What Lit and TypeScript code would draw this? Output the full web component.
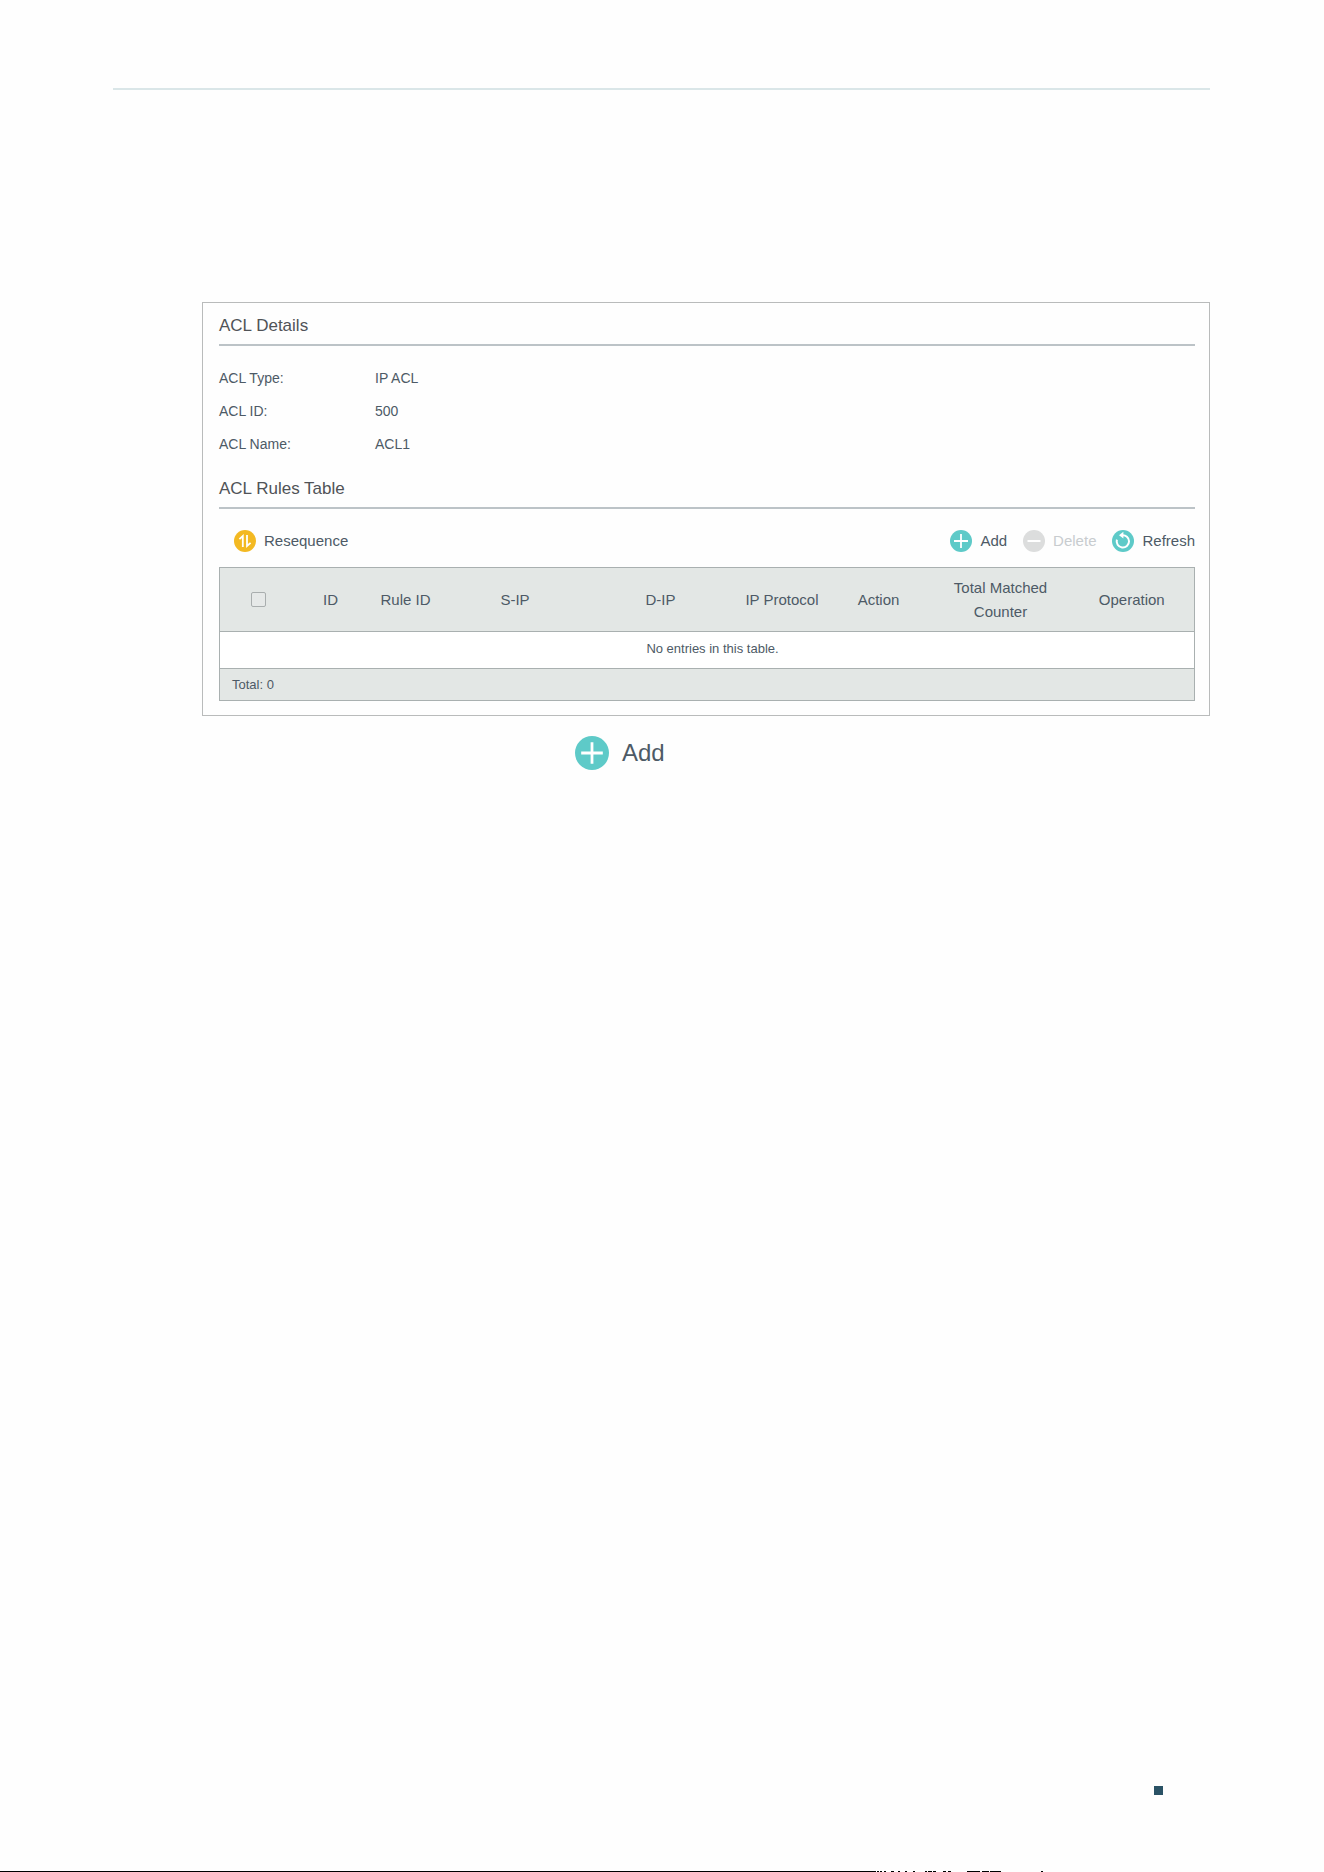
import { LitElement, html, css, svg } from 'lit';
import { customElement, property } from 'lit/decorators.js';

interface Column {
  label: string;
  width: number;
}

const icons = {
  add: svg`
    <circle cx="11" cy="11" r="11" fill="#5ecac8" />
    <path d="M11 4v14M4 11h14" stroke="#fff" stroke-width="1.8" fill="none" />
  `,
  delete: svg`
    <circle cx="11" cy="11" r="11" fill="#dcdddd" />
    <path d="M4.5 11h13" stroke="#fff" stroke-width="2" fill="none" />
  `,
  refresh: svg`
    <circle cx="11" cy="11" r="11" fill="#5ecac8" />
    <path d="M10 5.2A6.2 6.2 0 1 1 4.9 9.6" stroke="#fff" stroke-width="2" fill="none" />
    <path d="M11.4 1.8v6.8L7 5.2z" fill="#fff" />
  `,
  resequence: svg`
    <circle cx="11" cy="11" r="11" fill="#f3b922" />
    <path d="M5.4 9.2L8.8 6V17M13 5v11L16.6 12.8" stroke="#fff" stroke-width="1.8" fill="none" />
  `,
};

@customElement('tool-button')
export class ToolButton extends LitElement {
  static styles = css`
    :host {
      display: inline-flex;
    }
    button {
      display: inline-flex;
      align-items: center;
      gap: 8px;
      padding: 0;
      border: 0;
      background: none;
      color: #4d5a66;
      font: 15px/22px 'Liberation Sans', Arial, sans-serif;
      cursor: pointer;
    }
    button:disabled {
      color: #c8cccf;
      cursor: default;
    }
    svg {
      display: block;
      flex: none;
      width: 22px;
      height: 22px;
    }
    .large {
      gap: 13px;
      font-size: 24px;
      line-height: 34px;
    }
    .large svg {
      width: 34px;
      height: 34px;
    }
  `;

  @property({ type: String }) icon: keyof typeof icons = 'add';
  @property({ type: String }) label = '';
  @property({ type: Boolean }) large = false;
  @property({ type: Boolean }) disabled = false;

  render() {
    return html`
      <button type="button" class=${this.large ? 'large' : ''} ?disabled=${this.disabled}>
        <svg viewBox="0 0 22 22" aria-hidden="true">${icons[this.icon]}</svg>
        <span>${this.label}</span>
      </button>
    `;
  }
}

@customElement('app-root')
export class AppRoot extends LitElement {
  static styles = css`
    :host {
      display: flex;
      flex-direction: column;
      box-sizing: border-box;
      min-height: 100vh;
      background: #fefefe;
      color: #4d5a66;
      font-family: 'Liberation Sans', Arial, sans-serif;
    }
    .sheet {
      flex: 1;
      padding: 88px 114px 0 113px;
    }
    .top-rule {
      height: 2px;
      margin: 0;
      border: 0;
      background: #dae6e8;
    }
    .content {
      margin: 212px 0 0 89px;
    }
    .panel {
      padding: 0 14px 14px 16px;
      border: 1px solid #b9bbbb;
    }
    h2 {
      margin: 0;
      padding: 13px 0 8px;
      border-bottom: 2px solid #bcc3c7;
      color: #505357;
      font-size: 17px;
      font-weight: 400;
      line-height: 20px;
    }
    .details {
      display: grid;
      grid-template-columns: 156px 1fr;
      margin: 16px 0 5px;
      font-size: 14px;
      line-height: 33px;
    }
    .details dt,
    .details dd {
      margin: 0;
    }
    .toolbar {
      display: flex;
      gap: 16px;
      padding: 21px 0 15px 15px;
    }
    .spacer {
      flex: 1;
    }
    table {
      width: 100%;
      table-layout: fixed;
      border-collapse: collapse;
      border: 1px solid #a9b0b0;
      font-size: 13px;
      line-height: 20px;
    }
    th,
    td {
      padding: 0;
    }
    tr {
      border-bottom: 1px solid #a9b0b0;
    }
    th {
      height: 63px;
      background: #e3e7e5;
      font-size: 15px;
      font-weight: 400;
      line-height: 24px;
    }
    .check {
      display: block;
      appearance: none;
      width: 15px;
      height: 15px;
      margin: 0 auto;
      border: 1px solid #a9aeae;
      border-radius: 2px;
      background: #e6e9e8;
    }
    .empty {
      height: 34px;
      padding: 0 0 2px 11px;
      background: #fff;
      text-align: center;
    }
    .total {
      height: 31px;
      padding-left: 12px;
      background: #e3e7e5;
    }
    .hint {
      padding: 20px 0 0 37%;
    }
    footer {
      display: flex;
      flex-direction: column;
    }
    .mark {
      align-self: flex-end;
      width: 9px;
      height: 9px;
      margin: 0 161px 76px 0;
      background: #2a5265;
    }
    .edge {
      display: block;
      width: 100%;
      height: 1px;
    }
  `;

  @property({ attribute: false }) details: [string, string][] = [
    ['ACL Type:', 'IP ACL'],
    ['ACL ID:', '500'],
    ['ACL Name:', 'ACL1'],
  ];

  @property({ attribute: false }) columns: Column[] = [
    { label: 'ID', width: 66 },
    { label: 'Rule ID', width: 84 },
    { label: 'S-IP', width: 135 },
    { label: 'D-IP', width: 156 },
    { label: 'IP Protocol', width: 87 },
    { label: 'Action', width: 106 },
    { label: 'Total Matched Counter', width: 138 },
    { label: 'Operation', width: 125 },
  ];

  // Run lengths along the bottom edge: [ink, gap after it]
  @property({ attribute: false }) edge: [number, number][] = [
    [876, 1], [2, 1], [2, 2], [2, 5], [3, 4], [2, 5], [2, 6], [2, 10],
    [2, 1], [4, 1], [3, 7], [3, 2], [3, 16], [13, 2], [7, 1], [11, 40], [2, 0],
  ];

  render() {
    return html`
      <main class="sheet">
        <hr class="top-rule" />
        <div class="content">
          <section class="panel">
            <h2>ACL Details</h2>
            <dl class="details">
              ${this.details.map(([name, value]) => html`<dt>${name}</dt><dd>${value}</dd>`)}
            </dl>
            <h2>ACL Rules Table</h2>
            <div class="toolbar">
              <tool-button icon="resequence" label="Resequence"></tool-button>
              <span class="spacer"></span>
              <tool-button icon="add" label="Add"></tool-button>
              <tool-button icon="delete" label="Delete" disabled></tool-button>
              <tool-button icon="refresh" label="Refresh"></tool-button>
            </div>
            <table>
              <colgroup>
                <col style="width: 78px" />
                ${this.columns.map((c) => html`<col style="width: ${c.width}px" />`)}
              </colgroup>
              <thead>
                <tr>
                  <th><input class="check" type="checkbox" aria-label="Select all rules" /></th>
                  ${this.columns.map((c) => html`<th scope="col">${c.label}</th>`)}
                </tr>
              </thead>
              <tbody>
                <tr>
                  <td class="empty" colspan=${this.columns.length + 1}>No entries in this table.</td>
                </tr>
              </tbody>
              <tfoot>
                <tr>
                  <td class="total" colspan=${this.columns.length + 1}>Total: 0</td>
                </tr>
              </tfoot>
            </table>
          </section>
          <div class="hint">
            <tool-button icon="add" label="Add" large></tool-button>
          </div>
        </div>
      </main>
      <footer>
        <span class="mark"></span>
        <svg class="edge" viewBox="0 0 1324 1" preserveAspectRatio="none" aria-hidden="true">
          <path d=${'M0 .5' + this.edge.map(([ink, gap]) => `h${ink}m${gap} 0`).join('')} stroke="#000" />
        </svg>
      </footer>
    `;
  }
}
